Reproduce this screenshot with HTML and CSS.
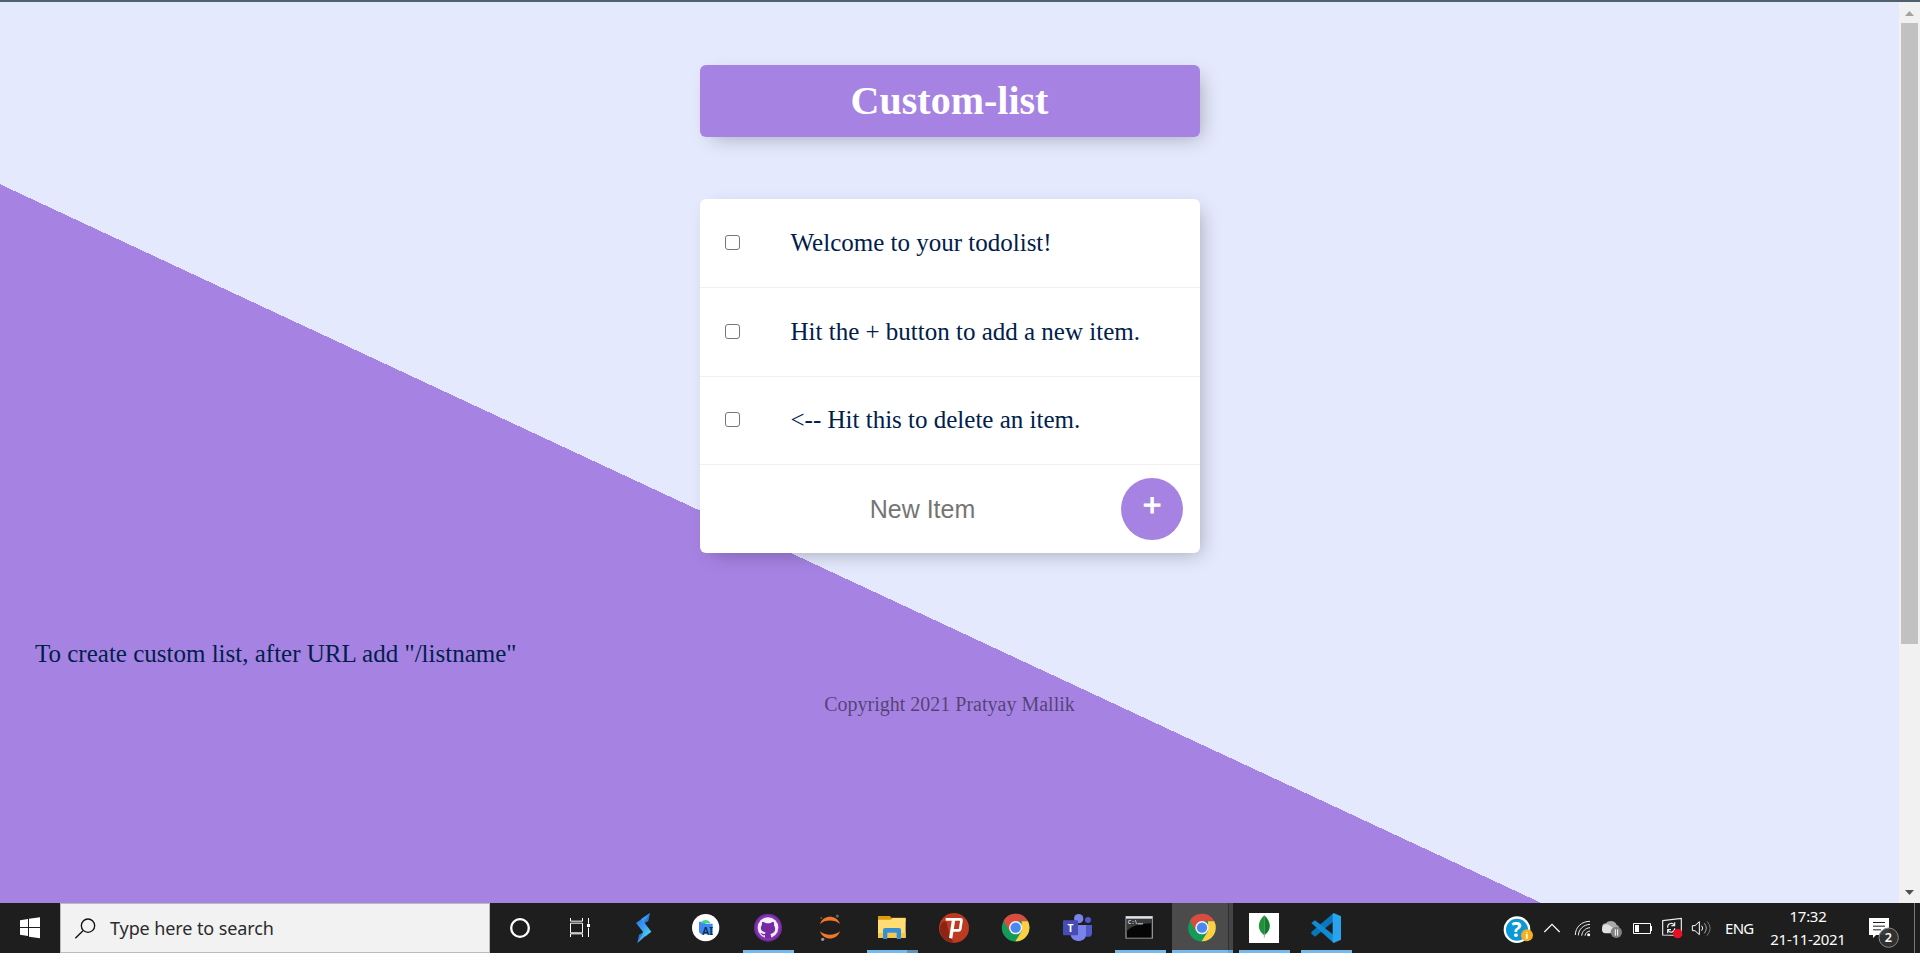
FILE: index.html
```html
<!DOCTYPE html>
<html lang="en">
<head>
<meta charset="utf-8">
<title>Custom-list</title>
<link rel="stylesheet" href="styles.css">
</head>
<body>
<div class="window-edge"></div>
<div class="viewport">
  <main class="page">
    <h1 class="heading">Custom-list</h1>
    <div class="box">
      <div class="item"><span class="check"></span><p class="item-text">Welcome to your todolist!</p></div>
      <div class="item"><span class="check"></span><p class="item-text">Hit the + button to add a new item.</p></div>
      <div class="item last"><span class="check"></span><p class="item-text">&lt;-- Hit this to delete an item.</p></div>
      <div class="new-item"><span class="field">New Item</span><span class="add">+</span></div>
    </div>
    <p class="hint">To create custom list, after URL add "/listname"</p>
    <footer class="copyright">Copyright 2021 Pratyay Mallik</footer>
  </main>
  <div class="scrollbar">
    <svg class="arrow" viewBox="0 0 21 21"><path d="M6 14h9l-4.500-5z" fill="#a3a3a3"/></svg>
    <div class="thumb"></div>
    <svg class="arrow arrow-down" viewBox="0 0 21 21"><path d="M6 8h9l-4.500 5z" fill="#505050"/></svg>
  </div>
</div>
<div class="taskbar">
  <svg class="start" viewBox="0 30 180 150"><path fill="#fff" d="M60 82l24-4v24H60zM87 77.500l33-4.500v29H87zM60 105h24v24l-24-3.500zM87 105h33v31l-33-5z"/></svg>
  <div class="search">
    <svg class="search-icon" viewBox="222 70 66 66"><g fill="none" stroke="#111" stroke-width="4"><circle cx="264" cy="96" r="20"/><path d="M249 111l-23 23"/></g></svg>
    <span class="search-text">Type here to search</span>
  </div>
  <svg class="app cortana" viewBox="30 30 180 150"><circle cx="120" cy="105" r="26.500" fill="none" stroke="#fff" stroke-width="7"/></svg>
  <svg class="app view" viewBox="210 30 189 150"><g fill="none" stroke="#fff" stroke-width="3"><path d="M271.500 75v9.500h36V75M271.500 132v-9.500h36v9.500M271.500 90.500h36v29h-36zM325.500 75v17M325.500 104v28"/></g><path fill="#fff" d="M321 93h9v9h-9z"/></svg>
  <svg class="app" viewBox="399 30 186 150">
    <defs><linearGradient id="bolt" x1="0" y1="0" x2="1" y2="1"><stop offset="0" stop-color="#3176e8"/><stop offset=".5" stop-color="#3ba0f4"/><stop offset="1" stop-color="#54e1f3"/></linearGradient></defs>
    <path fill="#2c78ca" d="M510 60l-5 24-14 8-7-10z"/><path fill="#2b78d0" d="M472 150l5-25 13-7 7 8z"/><path fill="url(#bolt)" d="M468 90l17-12 29 38-19 15-7-4 1-11z"/><path fill="#3b9af4" d="M510 60l-27 18 8 10z"/><path fill="#4baef0" d="M472 150l22-19-6-8z"/>
  </svg>
  <svg class="app" viewBox="585 30 186 150"><circle cx="677" cy="104" r="41" fill="#fff"/><path fill="#4285f4" d="M657 86h15l5 6h21v32h-34l-7-6z"/><path fill="#3ddc84" d="M663 91c2-12 24-14 28 0z"/><text x="667" y="125" font-size="31" font-weight="600" fill="#073042" textLength="32">AI</text></svg>
  <div class="app open">
    <svg class="glyph" viewBox="771 30 186 150"><circle cx="864" cy="104" r="42" fill="#6c2ba0"/><circle cx="864" cy="104" r="38" fill="#8731ad"/><circle cx="864" cy="104" r="31" fill="#f5edf7"/><path fill="#762aa1" d="M847 87c5 0 9 2 11 4h12c4-3 7-4 11-4 2 5 1 9 1 10 9 15-1 25-11 26 3 5 2 12 2 12h-18v-8c-9 2-10-5-14-7 6-2 7 5 14 2l2-4c-13-2-19-12-11-23 0-3-1-5 1-8z"/></svg>
    <span class="bar"></span>
  </div>
  <svg class="app" viewBox="27 30 186 150"><path fill="#f37726" d="M90 93c10-29 50-29 60 0-16-14-44-14-60 0zM90 115c10 29 50 29 60 0-16 14-44 14-60 0z"/><circle cx="142" cy="69" r="4.500" fill="#666"/><circle cx="94" cy="75" r="3" fill="#575757"/><circle cx="98" cy="139" r="5" fill="#999"/></svg>
  <div class="app open grouped">
    <svg class="glyph" viewBox="213 30 186 150"><path fill="#dd9b0b" d="M264 69h36l4 5h43v12h-83z"/><path fill="#ffdc74" d="M264 80h39l5-5h39v60h-83z"/><path fill="#f7c64e" d="M264 120h83v15h-83z"/><path fill="#3490d2" d="M279 138v-27q0-6 6-6h42q6 0 6 6v27h-13v-19h-28v19z"/></svg>
    <span class="bar"></span>
  </div>
  <svg class="app" viewBox="399 30 186 150"><circle cx="492" cy="105" r="45" fill="#bc3a20"/><path fill="#8c2514" d="M468 84l14 50 8 14c-34-2-50-34-34-60z"/><g fill="none" stroke="#fff" stroke-width="8"><path d="M467 79h45q3 0 2.500 3l-4 27q-.5 3-3.500 3h-21"/><path d="M491 79l-9 57" stroke-width="10"/></g></svg>
  <svg class="app" viewBox="585 30 186 150"><g id="chrome"><circle cx="677" cy="104" r="41.500" fill="#129c57"/><path fill="#dc4b40" d="M641 83a41.500 41.500 0 0 1 73 2h-37l-18 30z"/><path fill="#ffce43" d="M714 85a41.500 41.500 0 0 1-38 60l19-30V85z"/><circle cx="677" cy="104" r="20" fill="#f1f1f1"/><circle cx="677" cy="104" r="15.500" fill="#4a88f1"/></g></svg>
  <svg class="app" viewBox="771 30 186 150"><circle cx="894" cy="81" r="9" fill="#5059c9"/><path fill="#5059c9" d="M884 96h22v26q-2 12-18 9z"/><circle cx="866" cy="77" r="14" fill="#7b83eb"/><path fill="#7b83eb" d="M842 96h46v29c0 25-44 25-46 0z"/><rect x="819" y="82" width="45" height="45" rx="3" fill="#454db4"/><text x="841.500" y="116" font-size="31" font-weight="700" text-anchor="middle" fill="#fff">T</text></svg>
  <div class="app open">
    <svg class="glyph" viewBox="57 30 186 150"><path fill="#8b939a" d="M106 69h83v68h-83z"/><path fill="#dfe4e8" d="M108 70h79v6h-79z"/><path fill="#050505" d="M110 78h75v56h-75z"/><path fill="#393939" d="M110 78h75v13c-38 1-62 9-75 24z"/><text x="113" y="93" font-size="16" font-weight="700" fill="#ddd" textLength="28">C:\</text><path fill="#ddd" d="M143 91h16v3h-16z"/></svg>
    <span class="bar"></span>
  </div>
  <div class="app open active">
    <svg class="glyph" viewBox="243 30 186 150"><path fill="#4b4b4b" d="M246 30h168v141H246z"/><path fill="#303030" d="M414 30h3v141h-3z"/><path fill="#454545" d="M417 30h12v141h-12z"/><use href="#chrome" x="-341"/></svg>
    <span class="bar"></span>
  </div>
  <div class="app open">
    <svg class="glyph" viewBox="429 30 186 150"><path fill="#fff" d="M477 60h90v90h-90z"/><path fill="#23913b" d="M523 67c-22 20-22 45 0 60z"/><path fill="#137b2d" d="M523 67c22 20 22 45 0 60z"/><path stroke="#9b9b7a" stroke-width="2.500" d="M523 120v14"/></svg>
    <span class="bar"></span>
  </div>
  <div class="app open">
    <svg class="glyph" viewBox="615 30 186 150"><path fill="#0877bd" d="M731 60v25l-56 46-11-9v-5z"/><path fill="#118bd3" d="M664 90l11-8 56 44v24z"/><path fill="#2aa3ef" d="M731 60l22 10v70l-22 10-3-4V64z"/></svg>
    <span class="bar"></span>
  </div>
  <div class="tray">
    <svg class="icon help" viewBox="60 30 108 150"><circle cx="111" cy="110" r="40" fill="#fff"/><circle cx="111" cy="110" r="33" fill="#0b98d8"/><text x="109" y="132" font-size="62" font-weight="700" text-anchor="middle" fill="#fff">?</text><circle cx="141" cy="127" r="18" fill="#f6ad20"/><text x="141" y="137" font-size="28" font-weight="700" text-anchor="middle" fill="#fff">i</text></svg>
    <svg class="icon chevron" viewBox="168 30 96 150"><path d="M193 117l23-23 23 23" fill="none" stroke="#fff" stroke-width="3.500"/></svg>
    <svg class="icon wifi" viewBox="264 30 84 150"><g fill="none" stroke="#eee" stroke-width="3"><path d="M286 126c0-24 19-41 44-41M295 127c1-19 16-32 35-33M305 128c1-13 12-23 25-24M315 128c1-8 7-13 15-14"/></g><circle cx="326" cy="125" r="4.500" fill="#fff"/></svg>
    <svg class="icon cloud" viewBox="348 30 96 150"><path fill="#a9a9a9" d="M376 111c-13-5-12-20 2-20 8-12 29-8 32 5 11 3 10 18 0 18z"/><path fill="#e1e1e1" d="M366 107c0-12 13-17 22-10l24 16-4 8h-33c-7-2-10-7-9-14z"/><circle cx="409" cy="118" r="17" fill="#818181"/><path stroke="#fff" stroke-width="3" d="M406 109v19M413 109v19"/></svg>
    <svg class="icon battery" viewBox="444 30 90 150"><path d="M460.500 91.500h51v30h-51z" fill="none" stroke="#fff" stroke-width="3"/><path fill="#fff" d="M465 96h12v21h-12zM513 99h3v15h-3z"/></svg>
    <svg class="icon update" viewBox="534 30 84 150"><g fill="none" stroke="#eee" stroke-width="3.500"><path d="M548 83l56-7v51l-56-1zM563 104v-3c0-10 15-14 20-5M584 88v10h-10M584 106c0 13-15 15-20 6M563 121v-11h10"/></g><circle cx="593" cy="122" r="14" fill="#e81123"/></svg>
    <svg class="icon volume" viewBox="618 30 93 150"><g fill="none" stroke-width="3"><path stroke="#fff" d="M637 98h8l13-12v39l-13-12h-8zM665 98q6 7 0 15"/><path stroke="#aaa" d="M673 91q12 14 0 30"/><path stroke="#777" d="M681 85q19 20 0 43"/></g></svg>
    <span class="lang">ENG</span>
    <div class="clock"><span class="time">17:32</span><span class="date">21-11-2021</span></div>
    <svg class="icon notice" viewBox="1155 30 120 150"><path fill="#fff" d="M1167 75h60v51h-39l-9 9v-9h-12z"/><path stroke="#1d1d1d" stroke-width="3" d="M1179 88.500h36M1179 99.500h36M1179 110.500h24"/><circle cx="1226" cy="134" r="29" fill="#333" fill-opacity=".95" stroke="#888" stroke-width="3"/><text x="1225" y="147" font-size="38" font-weight="600" text-anchor="middle" fill="#fff">2</text></svg>
    <span class="peek"></span>
  </div>
</div>
</body>
</html>
```
FILE: styles.css
```css
* { box-sizing: border-box; }
body { margin: 0; width: 1920px; height: 953px; overflow: hidden; display: flex; flex-direction: column; }
p, h1 { margin: 0; }

.window-edge { height: 2px; background: #4d626c; flex: none; }
.viewport { display: flex; height: 901px; flex: none; }
.page {
  width: 1899px; padding-top: 63px;
  background: linear-gradient(25deg, #a683e3 50%, #e4e9fd 50%) 0 0 / 1899px 1250px no-repeat;
  font-family: "Liberation Serif", serif; color: #00204a;
}
.heading {
  width: 500px; height: 72px; margin: 0 auto 62px 700px; padding-right: 1px;
  border-radius: 6px; background: #a683e3; color: #fff;
  box-shadow: 6px 6px 19px -6px rgba(0, 0, 0, .3);
  font-size: 40px; line-height: 72px; text-align: center;
}
.box {
  width: 500px; height: 354px; margin-left: 700px; overflow: hidden;
  border-radius: 6px; background: #fff;
  box-shadow: 6px 6px 19px -6px rgba(0, 0, 0, .3);
}
.item { display: flex; align-items: flex-start; height: 89px; padding-top: 30px; border-bottom: 1px solid #f1f1f1; }
.item.last { height: 88px; padding-top: 29px; }
.check { width: 15px; height: 15px; margin: 6px 50.5px 0 25px; border: 1px solid #767676; border-radius: 3px; background: #fff; }
.item-text { font-size: 25px; line-height: 28px; }
.new-item { display: flex; align-items: center; height: 88px; padding-right: 17px; }
.field { width: 421px; padding-left: 24px; font: 25px/30px "Liberation Sans", sans-serif; color: #757575; text-align: center; }
.add {
  width: 62px; height: 62px; border-radius: 50%; background: #a683e3; color: #fff;
  font: 32px/54px "Liberation Sans", sans-serif; text-align: center; -webkit-text-stroke: 1px #fff;
}
.hint { margin: 86px 0 0 35px; font-size: 25px; line-height: 29px; }
.copyright { margin-top: 25px; font-size: 20px; line-height: 23px; text-align: center; color: rgba(0, 0, 0, .5); }

.scrollbar { width: 21px; background: #f1f1f1; display: flex; flex-direction: column; align-items: center; }
.arrow { width: 21px; height: 21px; flex: none; }
.thumb { width: 17px; height: 621px; background: #c1c1c1; }
.arrow-down { margin-top: auto; }

.taskbar { display: flex; height: 50px; background: #1e1e1e; color: #fff; font-family: "Noto Sans", sans-serif; flex: none; }
.start { width: 60px; height: 50px; }
.search { display: flex; align-items: center; width: 430px; border: 1px solid #bbb; background: #f2f2f2; padding-left: 13px; }
.search-icon { width: 22px; height: 22px; }
.search-text { margin: 0 0 1px 14px; font-size: 18px; line-height: 24px; letter-spacing: -.1px; color: #2b2b2b; }
.app { display: block; width: 62px; height: 50px; flex: none; }
.cortana { width: 60px; }
.view { width: 63px; }
.open { position: relative; }
.glyph { display: block; width: 62px; height: 50px; }
.bar { position: absolute; left: 6px; bottom: 0; width: 51px; height: 3px; background: #76b9ed; }
.grouped .bar { background: linear-gradient(90deg, #76b9ed 40px, #5f92bb 40px); }
.active .bar { left: 1px; width: 61px; background: linear-gradient(90deg, #76b9ed 56px, #6ba5d3 56px); }

.tray { display: flex; align-items: center; margin-left: 143px; flex: 1; }
.icon { height: 50px; flex: none; }
.help { width: 36px; }
.chevron { width: 32px; }
.wifi { width: 28px; }
.cloud { width: 32px; }
.battery { width: 30px; }
.update { width: 28px; }
.volume { width: 31px; }
.lang { width: 46px; padding-left: 8px; font-size: 15px; letter-spacing: -.7px; }
.clock { width: 90px; display: flex; flex-direction: column; align-items: center; font-size: 15px; line-height: 23px; letter-spacing: -.3px; white-space: nowrap; }
.notice { width: 40px; margin-left: 12px; }
.peek { width: 1px; height: 50px; margin-left: 9px; background: #777; }
```
